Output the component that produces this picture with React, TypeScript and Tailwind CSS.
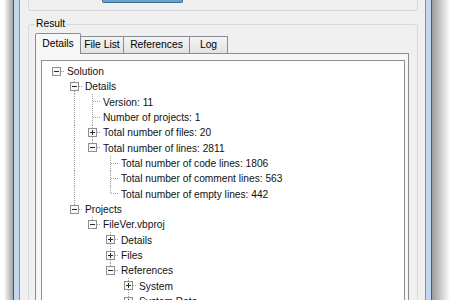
import React from 'react';

type TreeNode = {
  label: string;
  open?: boolean;
  children?: TreeNode[];
};

type FlatRow = {
  node: TreeNode;
  depth: number;
  guides: boolean[];
  hasNext: boolean;
  isFirstRoot: boolean;
};

const tree: TreeNode[] = [
  {
    label: 'Solution',
    open: true,
    children: [
      {
        label: 'Details',
        open: true,
        children: [
          { label: 'Version: 11' },
          { label: 'Number of projects: 1' },
          { label: 'Total number of files: 20', children: [{ label: 'FileVer.vbproj' }] },
          {
            label: 'Total number of lines: 2811',
            open: true,
            children: [
              { label: 'Total number of code lines: 1806' },
              { label: 'Total number of comment lines: 563' },
              { label: 'Total number of empty lines: 442' },
            ],
          },
        ],
      },
      {
        label: 'Projects',
        open: true,
        children: [
          {
            label: 'FileVer.vbproj',
            open: true,
            children: [
              { label: 'Details', children: [{ label: 'Version' }] },
              { label: 'Files', children: [{ label: 'Form1.vb' }] },
              {
                label: 'References',
                open: true,
                children: [
                  { label: 'System', children: [{ label: 'Version' }] },
                  { label: 'System.Data', children: [{ label: 'Version' }] },
                  { label: 'System.Deployment', children: [{ label: 'Version' }] },
                  { label: 'System.Drawing', children: [{ label: 'Version' }] },
                ],
              },
            ],
          },
        ],
      },
    ],
  },
];

// 트리를 줄 단위로 펼치기
function flatten(nodes: TreeNode[], depth: number, guides: boolean[], out: FlatRow[]) {
  nodes.forEach((node, i) => {
    const hasNext = i < nodes.length - 1;
    out.push({ node, depth, guides, hasNext, isFirstRoot: depth === 0 && i === 0 });
    if (node.open && node.children) {
      flatten(node.children, depth + 1, [...guides, hasNext], out);
    }
  });
  return out;
}

const LINE = '#a0a0a0';

function GuideCell({ show, h }: { show: boolean; h: number }) {
  return (
    <svg width="18" height={h} className="shrink-0">
      {show && <line x1="9.5" y1="0" x2="9.5" y2={h} stroke={LINE} strokeDasharray="1 1" />}
    </svg>
  );
}

function NodeCell({ row, h }: { row: FlatRow; h: number }) {
  const hasKids = !!row.node.children?.length;
  return (
    <svg width="18" height={h} className="shrink-0">
      {!row.isFirstRoot && <line x1="9.5" y1="0" x2="9.5" y2="7" stroke={LINE} strokeDasharray="1 1" />}
      {row.hasNext && <line x1="9.5" y1="8" x2="9.5" y2={h} stroke={LINE} strokeDasharray="1 1" />}
      <line x1="10" y1="7.5" x2="17" y2="7.5" stroke={LINE} strokeDasharray="1 1" />
      {hasKids && (
        <>
          <rect x="5.5" y="3.5" width="8" height="8" fill="#f8f8f8" stroke="#8f8f8f" />
          <rect x="7" y="7" width="5" height="1" fill="#2a2a2a" />
          {!row.node.open && <rect x="9" y="5" width="1" height="5" fill="#2a2a2a" />}
        </>
      )}
    </svg>
  );
}

export default function App() {
  const rows = flatten(tree, 0, [], []);

  return (
    <div className="w-[450px] h-[300px] overflow-hidden bg-white flex font-['Liberation_Sans',Arial,sans-serif] text-black">
      {/* 왼쪽 그림자 */}
      <div className="w-[13px] h-full bg-linear-to-r from-white from-30% to-[#a4a4a4]" />

      {/* 창 테두리 */}
      <div className="w-[419px] h-full flex border-x border-[#50565e] bg-[#c2d7ef] px-[5px]">
        <div className="flex-1 h-full border-x border-[#7f90a3] bg-[#f0f0f0] flex flex-col">
          {/* 위쪽 그룹 박스 끝부분 */}
          <div className="ml-[8px] w-[390px] h-[11px] shrink-0 border-x border-b border-[#d5d9dd] rounded-b-[3px]">
            <div className="ml-[73px] w-[81px] h-[3px] bg-[#6aa0c8] border-x border-b border-[#3c6f96] rounded-b-[2px]" />
          </div>

          <fieldset className="ml-[8px] mt-[7px] w-[390px] border border-[#d5d9dd] rounded-[3px] pl-[6px] pr-[8px] pt-[3px]">
            <legend className="px-[1px] text-[10.3px] leading-[12px]">Result</legend>

            {/* 탭 */}
            <div className="flex items-end h-[20px] text-[10.3px]">
              <div className="relative z-10 w-[46px] h-[21px] -mb-px border border-b-0 border-[#898c95] bg-[#f7f7f7] rounded-t-[2px] flex items-center justify-center pb-[1px]">
                Details
              </div>
              <div className="w-[43px] h-[17px] border-t border-r border-[#898c95] bg-linear-to-b from-[#f4f4f4] to-[#e2e2e2] flex items-center justify-center">
                File List
              </div>
              <div className="w-[66px] h-[17px] border-t border-r border-[#898c95] bg-linear-to-b from-[#f4f4f4] to-[#e2e2e2] flex items-center justify-center">
                References
              </div>
              <div className="w-[38px] h-[17px] border-t border-r border-[#898c95] bg-linear-to-b from-[#f4f4f4] to-[#e2e2e2] flex items-center justify-center">
                Log
              </div>
            </div>

            {/* 탭 페이지 */}
            <div className="h-[400px] border border-[#898c95] bg-[#f7f7f7] pl-[5px] pr-[3px] pt-[6px]">
              <div className="h-full border border-[#8e8f8f] bg-white pl-[5px] pt-[3px]">
                {rows.map((row, i) => {
                  const h = i % 3 === 2 ? 16 : 15;
                  return (
                    <div key={i} className={`flex items-center ${h === 16 ? 'h-[16px]' : 'h-[15px]'}`}>
                      {row.guides.map((g, k) => (
                        <GuideCell key={k} show={g} h={h} />
                      ))}
                      <NodeCell row={row} h={h} />
                      <span className="ml-[2px] text-[10.2px] leading-[15px] whitespace-nowrap text-[#111]">
                        {row.node.label}
                      </span>
                    </div>
                  );
                })}
              </div>
            </div>
          </fieldset>
        </div>
      </div>

      {/* 오른쪽 그림자 */}
      <div className="flex-1 h-full bg-linear-to-r from-[#9c9c9c] to-white" />
    </div>
  );
}
